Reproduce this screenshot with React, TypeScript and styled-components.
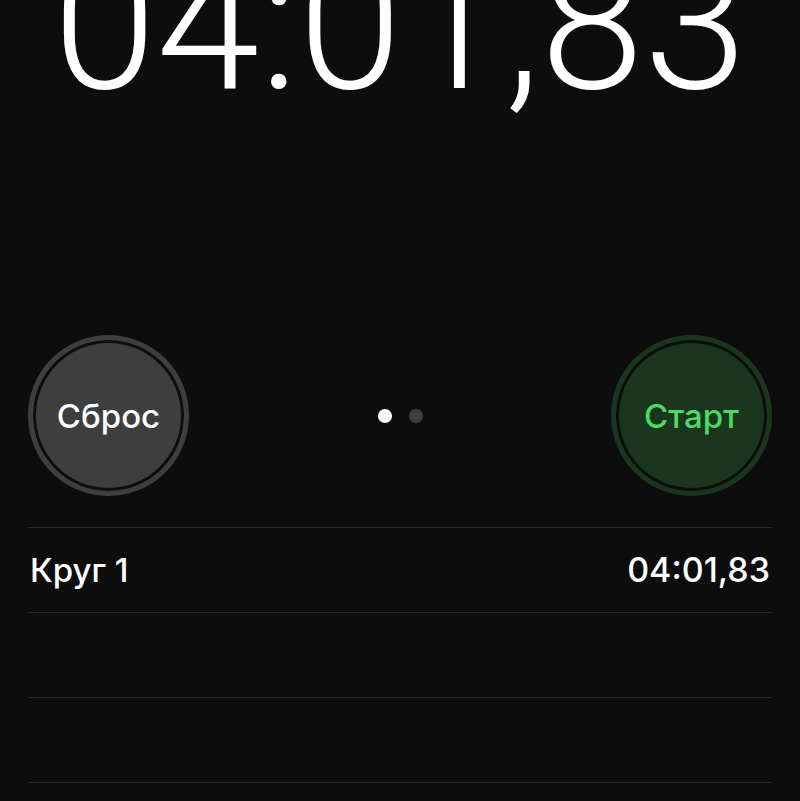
import React from "react";
import styled, { createGlobalStyle } from "styled-components";

const GlobalStyle = createGlobalStyle`
  * { box-sizing: border-box; }
  body {
    margin: 0;
    background: #0d0d0d;
    color: #fff;
    font-family: Inter, "Noto Sans", sans-serif;
    overflow: hidden;
  }
`;

const Screen = styled.main`
  display: flex;
  flex-direction: column;
  min-height: 100vh;
  padding: 0 28px;
`;

const Time = styled.h1`
  margin: -103px 0 184px;
  font-family: Roboto, sans-serif;
  font-size: 186px;
  line-height: 254px;
  font-weight: 300;
  text-align: center;
  white-space: nowrap;
`;

const Controls = styled.div`
  display: flex;
  align-items: center;
  justify-content: space-between;
`;

const RoundButton = styled.button<{ $tone: string; $text: string }>`
  width: 161px;
  height: 161px;
  padding: 0;
  border: 5px solid ${(p) => p.$tone};
  border-radius: 50%;
  background: ${(p) => p.$tone};
  box-shadow: inset 0 0 0 3px #0d0d0d;
  color: ${(p) => p.$text};
  font: 550 33px Inter, "Noto Sans", sans-serif;
`;

const Pages = styled.nav`
  display: flex;
  gap: 17px;
`;

const PageDot = styled.button<{ $active?: boolean }>`
  width: 14px;
  height: 14px;
  padding: 0;
  border: 0;
  border-radius: 50%;
  background: ${(p) => (p.$active ? "#fff" : "#3e3e3e")};
`;

const Laps = styled.table`
  width: 100%;
  margin-top: 31px;
  border-collapse: collapse;
  line-height: 40px;
  font-weight: 550;
`;

const LapRow = styled.tr`
  height: 85px;
  border-top: 1px solid #292929;
  border-bottom: 1px solid #292929;
`;

const LapName = styled.th`
  padding: 0 2px;
  font-size: 33px;
  font-weight: 550;
  text-align: left;
`;

const LapTime = styled.td`
  padding: 0 2px;
  font-size: 34px;
  text-align: right;
`;

const laps = [{ name: "Круг 1", time: "04:01,83" }, null, null];

export default function App() {
  return (
    <>
      <GlobalStyle />
      <Screen>
        <Time>04:01,83</Time>
        <Controls>
          <RoundButton $tone="#3e3e3e" $text="#fff">Сброс</RoundButton>
          <Pages>
            <PageDot $active aria-label="Страница 1" />
            <PageDot aria-label="Страница 2" />
          </Pages>
          <RoundButton $tone="#1b361f" $text="#4cd964">Старт</RoundButton>
        </Controls>
        <Laps>
          <tbody>
            {laps.map((lap, i) => (
              <LapRow key={i}>
                <LapName scope="row">{lap?.name}</LapName>
                <LapTime>{lap?.time}</LapTime>
              </LapRow>
            ))}
          </tbody>
        </Laps>
      </Screen>
    </>
  );
}
